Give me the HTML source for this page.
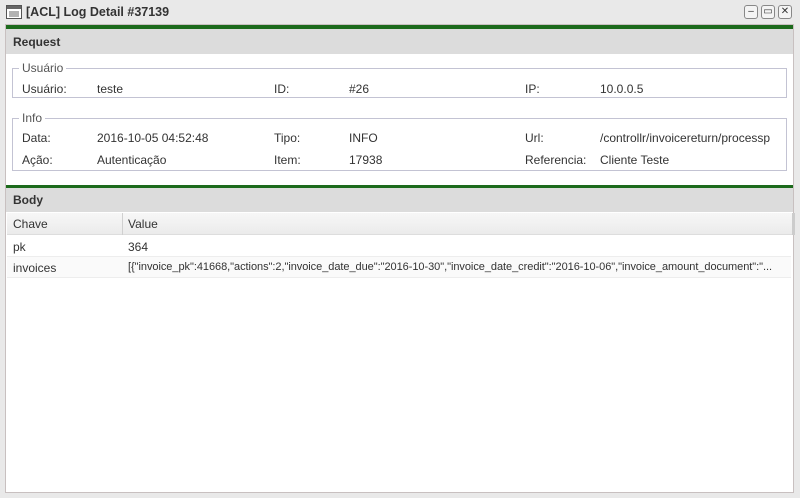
<!DOCTYPE html>
<html><head><style>
*{box-sizing:border-box;margin:0;padding:0}
body{width:800px;height:498px;background:#e9e9e9;font-family:"Liberation Sans",sans-serif;font-size:12px;color:#333;position:relative;overflow:hidden}
.abs{position:absolute}
.title{left:26px;top:5px;font-size:12.5px;font-weight:bold;color:#333}
.inner{left:5px;top:24px;width:789px;height:469px;background:#fff;border:1px solid #c8c0c0}
.green{height:4px;background:#1c6a1c}
.hdr{background:#dcdcdc;height:25px;font-weight:bold;padding:6px 7px;color:#333}
fieldset{position:absolute;border:1px solid #c3c3d3;left:6px;width:775px}
legend{margin-left:6px;padding:0 3px;color:#555;font-size:12px}
.lbl{position:absolute;color:#333}
.btn{position:absolute;top:5px;width:14px;height:14px;border:1px solid #888;border-radius:3px;background:#f4f4f4;font-size:10px;text-align:center;line-height:12px;color:#333}
.row{position:absolute;left:1px;width:784px;height:21px;border-bottom:1px solid #ededed}
.row span{position:absolute;top:4px}
</style></head><body>
<svg class="abs" style="left:6px;top:5px" width="16" height="14"><rect x="0.5" y="0.5" width="15" height="13" fill="#fff" stroke="#555"/><rect x="1" y="1" width="14" height="3" fill="#666"/><path d="M3 7h10M3 9h10M3 11h10" stroke="#666"/></svg>
<div class="abs title">[ACL] Log Detail #37139</div>
<div class="btn" style="left:744px">‒</div>
<div class="btn" style="left:761px">▭</div>
<div class="btn" style="left:778px">✕</div>
<div class="abs inner">
 <div class="green"></div>
 <div class="hdr">Request</div>
 <fieldset style="top:36px;height:37px"><legend>Usuário</legend></fieldset>
 <div class="lbl" style="left:16px;top:57px">Usuário:</div>
 <div class="lbl" style="left:91px;top:57px">teste</div>
 <div class="lbl" style="left:268px;top:57px">ID:</div>
 <div class="lbl" style="left:343px;top:57px">#26</div>
 <div class="lbl" style="left:519px;top:57px">IP:</div>
 <div class="lbl" style="left:594px;top:57px">10.0.0.5</div>
 <fieldset style="top:86px;height:60px"><legend>Info</legend></fieldset>
 <div class="lbl" style="left:16px;top:106px">Data:</div>
 <div class="lbl" style="left:91px;top:106px">2016-10-05 04:52:48</div>
 <div class="lbl" style="left:268px;top:106px">Tipo:</div>
 <div class="lbl" style="left:343px;top:106px">INFO</div>
 <div class="lbl" style="left:519px;top:106px">Url:</div>
 <div class="lbl" style="left:594px;top:106px">/controllr/invoicereturn/processp</div>
 <div class="lbl" style="left:16px;top:128px">Ação:</div>
 <div class="lbl" style="left:91px;top:128px">Autenticação</div>
 <div class="lbl" style="left:268px;top:128px">Item:</div>
 <div class="lbl" style="left:343px;top:128px">17938</div>
 <div class="lbl" style="left:519px;top:128px">Referencia:</div>
 <div class="lbl" style="left:594px;top:128px">Cliente Teste</div>
 <div class="abs" style="left:0;top:160px;width:787px"><div class="green" style="height:3px"></div><div class="hdr" style="height:24px;padding-top:5px">Body</div></div>
 <div class="abs" style="left:1px;top:188px;width:785px;height:22px;background:linear-gradient(#f7f7f7,#ebebeb);border-bottom:1px solid #ddd">
  <span class="abs" style="left:6px;top:4px">Chave</span>
  <div class="abs" style="left:115px;top:0;width:1px;height:22px;background:#d0d0d0"></div>
  <span class="abs" style="left:121px;top:4px">Value</span>
 </div>
 <div class="abs" style="left:786px;top:188px;width:3px;height:22px;background:#ccc"></div>
 <div class="row" style="top:211px"><span style="left:6px">pk</span><span style="left:121px">364</span></div>
 <div class="row" style="top:232px;background:#fafafa"><span style="left:6px">invoices</span><span style="left:121px;white-space:nowrap;font-size:11px;letter-spacing:-0.05px">[{"invoice_pk":41668,"actions":2,"invoice_date_due":"2016-10-30","invoice_date_credit":"2016-10-06","invoice_amount_document":"...</span></div>
</div>
</body></html>
